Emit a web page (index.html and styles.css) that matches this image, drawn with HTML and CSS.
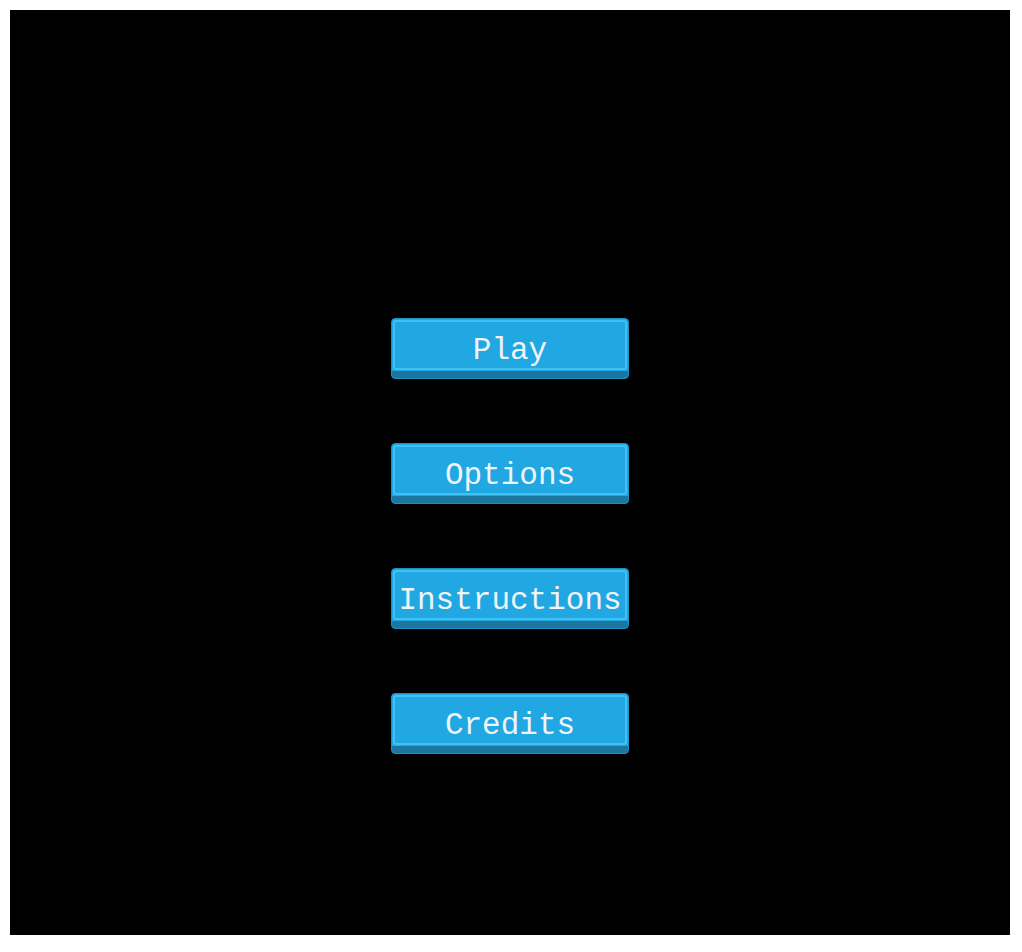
FILE: index.html
```html
<!DOCTYPE html>
<html>
<head>
<meta charset="utf-8">
<link rel="stylesheet" href="styles.css">
</head>
<body>
<main class="stage">
  <nav class="menu">
    <button class="menu-btn">Play</button>
    <button class="menu-btn">Options</button>
    <button class="menu-btn">Instructions</button>
    <button class="menu-btn">Credits</button>
  </nav>
</main>
</body>
</html>
```
FILE: styles.css
```css
html, body {
  margin: 0;
  padding: 0;
  background: #ffffff;
}
body {
  padding: 10px;
}
.stage {
  width: 1000px;
  height: 925px;
  background: #000000;
  box-sizing: border-box;
  padding-top: 308px;
}
.menu {
  display: flex;
  flex-direction: column;
  align-items: center;
  gap: 64px;
}
.menu-btn {
  width: 238px;
  height: 61px;
  box-sizing: border-box;
  margin: 0;
  padding: 3px 0 0 0;
  border: 1px solid #1f90c4;
  border-radius: 4px;
  background: linear-gradient(to bottom, #21a7e1 0, #21a7e1 52px, #1b77a0 52px);
  position: relative;
  font-family: "Liberation Mono", "Courier New", monospace;
  font-size: 31px;
  line-height: 1;
  color: #eef4f7;
  letter-spacing: 0;
}
.menu-btn::before {
  content: "";
  position: absolute;
  left: 1px;
  right: 1px;
  top: 1px;
  height: 50px;
  border: 2px solid #3fc1f4;
  border-radius: 3px;
  box-sizing: border-box;
  pointer-events: none;
}
```
